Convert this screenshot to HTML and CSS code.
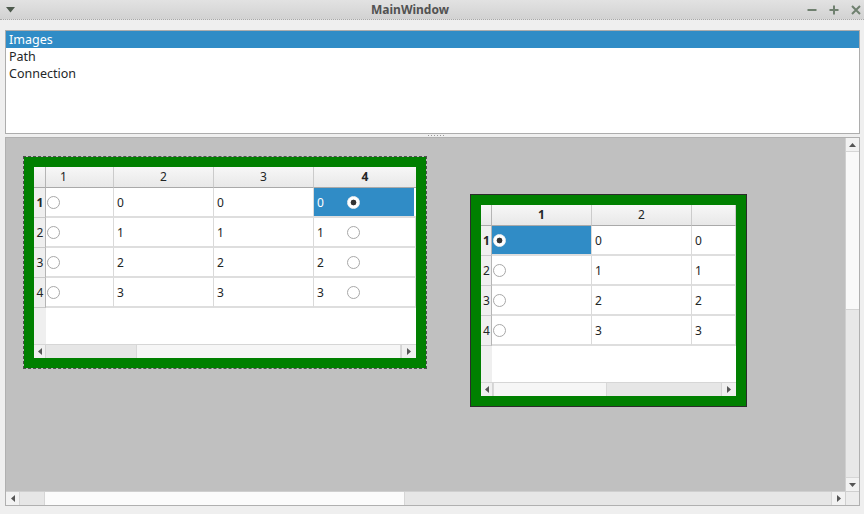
FILE: index.html
```html
<!DOCTYPE html>
<html>
<head>
<meta charset="utf-8">
<link rel="stylesheet" href="styles.css">
</head>
<body>
<div class="window">
  <div class="titlebar">
    <div class="tb-left">
      <svg width="9" height="6" viewBox="0 0 9 6"><path d="M0 0H9L4.5 5.5Z" fill="#4d5a4d"/></svg>
    </div>
    <div class="tb-title">MainWindow</div>
    <div class="tb-right">
      <svg class="tb-btn" width="10" height="10" viewBox="0 0 10 10"><path d="M0.5 5H9.5" stroke="#6f806f" stroke-width="2"/></svg>
      <svg class="tb-btn" width="10" height="10" viewBox="0 0 10 10"><path d="M0.5 5H9.5M5 0.5V9.5" stroke="#6f806f" stroke-width="2"/></svg>
      <svg class="tb-btn" width="10" height="10" viewBox="0 0 10 10"><path d="M1 1L9 9M9 1L1 9" stroke="#6f806f" stroke-width="2"/></svg>
    </div>
  </div>
  <div class="central">
    <div class="list">
      <div class="item sel">Images</div>
      <div class="item">Path</div>
      <div class="item">Connection</div>
    </div>
    <div class="splitter"><div class="grip"></div></div>
    <div class="scrollarea">
      <div class="viewport">
        <div class="frame frame-a">
          <div class="green">
            <div class="tbl tbl-a">
              <div class="hh corner"></div>
              <div class="hh hh-first">1</div>
              <div class="hh">2</div>
              <div class="hh">3</div>
              <div class="hh bold">4</div>

              <div class="vh bold">1</div>
              <div class="td"><span class="radio"></span></div>
              <div class="td">0</div>
              <div class="td">0</div>
              <div class="td sel"><span class="num">0</span><span class="radio on"></span></div>

              <div class="vh">2</div>
              <div class="td"><span class="radio"></span></div>
              <div class="td">1</div>
              <div class="td">1</div>
              <div class="td"><span class="num">1</span><span class="radio"></span></div>

              <div class="vh">3</div>
              <div class="td"><span class="radio"></span></div>
              <div class="td">2</div>
              <div class="td">2</div>
              <div class="td"><span class="num">2</span><span class="radio"></span></div>

              <div class="vh">4</div>
              <div class="td"><span class="radio"></span></div>
              <div class="td">3</div>
              <div class="td">3</div>
              <div class="td"><span class="num">3</span><span class="radio"></span></div>

              <div class="vh-fill"></div>
              <div class="fill"></div>

              <div class="tscroll">
                <div class="arrow"><svg width="4" height="7" viewBox="0 0 4 7"><path d="M4 0V7L0 3.5Z" fill="#555"/></svg></div>
                <div class="track ta-1"></div>
                <div class="handle ta-2"></div>
                <div class="arrow arrow-r"><svg width="4" height="7" viewBox="0 0 4 7"><path d="M0 0V7L4 3.5Z" fill="#555"/></svg></div>
              </div>
            </div>
          </div>
        </div>

        <div class="frame frame-b">
          <div class="green">
            <div class="tbl tbl-b">
              <div class="hh corner"></div>
              <div class="hh bold">1</div>
              <div class="hh">2</div>
              <div class="hh"></div>

              <div class="vh bold">1</div>
              <div class="td sel"><span class="radio on"></span></div>
              <div class="td">0</div>
              <div class="td">0</div>

              <div class="vh">2</div>
              <div class="td"><span class="radio"></span></div>
              <div class="td">1</div>
              <div class="td">1</div>

              <div class="vh">3</div>
              <div class="td"><span class="radio"></span></div>
              <div class="td">2</div>
              <div class="td">2</div>

              <div class="vh">4</div>
              <div class="td"><span class="radio"></span></div>
              <div class="td">3</div>
              <div class="td">3</div>

              <div class="vh-fill"></div>
              <div class="fill"></div>

              <div class="tscroll">
                <div class="arrow"><svg width="4" height="7" viewBox="0 0 4 7"><path d="M4 0V7L0 3.5Z" fill="#555"/></svg></div>
                <div class="handle tb-1"></div>
                <div class="track tb-2"></div>
                <div class="arrow arrow-r"><svg width="4" height="7" viewBox="0 0 4 7"><path d="M0 0V7L4 3.5Z" fill="#555"/></svg></div>
              </div>
            </div>
          </div>
        </div>
      </div>

      <div class="vbar">
        <div class="varrow"><svg width="7" height="4" viewBox="0 0 7 4"><path d="M0 4H7L3.5 0Z" fill="#555"/></svg></div>
        <div class="vhandle"></div>
        <div class="vtrack"></div>
        <div class="varrow varrow-d"><svg width="7" height="4" viewBox="0 0 7 4"><path d="M0 0H7L3.5 4Z" fill="#555"/></svg></div>
      </div>
      <div class="hbar">
        <div class="harrow"><svg width="4" height="7" viewBox="0 0 4 7"><path d="M4 0V7L0 3.5Z" fill="#555"/></svg></div>
        <div class="htrack h-1"></div>
        <div class="hhandle"></div>
        <div class="htrack h-2"></div>
        <div class="harrow harrow-r"><svg width="4" height="7" viewBox="0 0 4 7"><path d="M0 0V7L4 3.5Z" fill="#555"/></svg></div>
      </div>
      <div class="sa-corner"></div>
    </div>
  </div>
</div>
</body>
</html>
```

FILE: styles.css
```css
* { box-sizing: border-box; }
html, body {
  margin: 0;
  padding: 0;
}
body {
  width: 864px;
  height: 514px;
  overflow: hidden;
  background: #efefef;
  font-family: "Noto Sans", "DejaVu Sans", sans-serif;
  font-size: 12px;
  color: #232627;
}
.window {
  display: flex;
  flex-direction: column;
  width: 864px;
  height: 514px;
}
.titlebar {
  height: 20px;
  display: flex;
  align-items: center;
  background: linear-gradient(#e2e2e2, #d2d2d2);
  border-bottom: 1px dotted #a9a9a9;
}
.tb-left {
  width: 20px;
  padding-left: 6px;
  display: flex;
  align-items: center;
  padding-top: 1px;
}
.tb-title {
  flex: 1;
  text-align: center;
  font-weight: bold;
  color: #525252;
  font-size: 12px;
  line-height: 19px;
}
.tb-right {
  width: 64px;
  display: flex;
  align-items: center;
  gap: 12px;
  padding-left: 7px;
}
.tb-btn { display: block; }

.central {
  flex: 1;
  display: flex;
  flex-direction: column;
  padding: 10px 4px 8px 5px;
}
.list {
  height: 104px;
  border: 1px solid #adadad;
  background: #fff;
}
.item {
  height: 17px;
  line-height: 17px;
  padding-left: 3px;
  font-size: 12.5px;
  color: #232627;
}
.item.sel {
  background: #308cc6;
  color: #fff;
}
.splitter {
  height: 3px;
  display: flex;
  justify-content: center;
  align-items: center;
  padding-left: 7px;
}
.grip {
  width: 17px;
  height: 1px;
  background: repeating-linear-gradient(90deg, #9a9a9a 0 1px, transparent 1px 3px);
}
.scrollarea {
  height: 369px;
  border: 1px solid #b0b0b0;
  display: grid;
  grid-template-columns: 1fr 14px;
  grid-template-rows: 1fr 14px;
}
.viewport {
  position: relative;
  background: #c0c0c0;
  overflow: hidden;
}
.frame {
  position: absolute;
  width: 404px;
  height: 213px;
}
.frame-a {
  left: 17px;
  top: 18px;
  border: 1px dashed #505050;
}
.frame-b {
  left: 464px;
  top: 56px;
  width: 277px;
  border: 1px solid #2c2c2c;
}
.green {
  width: 100%;
  height: 100%;
  background: #008000;
  padding: 10px;
}
.tbl {
  width: 100%;
  height: 100%;
  background: #fff;
  display: grid;
  grid-template-rows: 21px repeat(4, 30px) 1fr 14px;
  overflow: hidden;
}
.tbl-a { grid-template-columns: 12px 68px 100px 100px 101px 1fr; }
.tbl-b { grid-template-columns: 11px 100px 100px 1fr; }

.hh {
  background: linear-gradient(#f7f7f7, #e8e8e8);
  border-right: 1px solid #cbcbcb;
  border-bottom: 1px solid #a9a9a9;
  text-align: center;
  line-height: 20px;
  font-size: 12px;
  color: #232627;
}
.tbl-a .hh:nth-child(5) { grid-column: span 2; border-right: none; }
.tbl-a .td:has(+ .vh), .tbl-a .td:has(+ .vh-fill) { grid-column: span 2; }
.hh-first {
  text-align: left;
  padding-left: 14px;
}
.hh.corner { border-right: 1px solid #b5b5b5; }
.bold { font-weight: bold; }
.vh {
  background: #efefef;
  border-right: 1px solid #b5b5b5;
  border-bottom: 1px solid #c9c9c9;
  text-align: center;
  padding-left: 1px;
  line-height: 29px;
  font-size: 12px;
}
.vh-fill {
  background: #efefef;
}
.fill { grid-column: 2 / -1; background: #fff; }
.td {
  border-right: 1px solid #dadada;
  border-bottom: 2px solid #dedede;
  display: flex;
  align-items: center;
  padding-left: 3px;
  font-size: 12px;
  white-space: nowrap;
}
.td:has(.radio:only-child) { padding-left: 1px; }
.td.sel {
  background: #308cc6;
  color: #fff;
}
.tbl-a .td.sel {
  background: linear-gradient(90deg, #308cc6 0 100px, #fff 100px);
  border-right: none;
}
.num {
  display: inline-block;
  width: 30px;
}
.radio {
  display: inline-block;
  width: 13px;
  height: 13px;
  border-radius: 50%;
  border: 1px solid #a8a8a8;
  background: #fff;
  flex: none;
}
.radio.on {
  border-color: #f0f0f0;
  background: radial-gradient(circle, #333 0 2.6px, #fff 3.2px);
}
.tscroll {
  grid-column: 1 / -1;
  display: flex;
  border-top: 1px solid #d6d6d6;
  background: #e8e8e8;
}
.arrow {
  width: 12px;
  display: flex;
  align-items: center;
  justify-content: center;
  background: #f0f0f0;
  border-right: 1px solid #d4d4d4;
}
.arrow-r {
  width: 15px;
  border-right: none;
  border-left: 1px solid #d4d4d4;
}
.track { background: #e6e6e6; }
.handle { background: #f6f6f6; border-left: 1px solid #d8d8d8; border-right: 1px solid #d8d8d8; }
.ta-1 { width: 90px; }
.ta-2 { flex: 1; }
.tb-1 { width: 114px; }
.tb-2 { flex: 1; }

.vbar {
  display: flex;
  flex-direction: column;
  border-left: 1px solid #d0d0d0;
  background: #e8e8e8;
}
.varrow {
  height: 14px;
  display: flex;
  align-items: center;
  justify-content: center;
  background: #f2f2f2;
  border-bottom: 1px solid #d6d6d6;
}
.varrow-d {
  border-bottom: none;
  border-top: 1px solid #d6d6d6;
}
.vhandle {
  height: 158px;
  background: #f9f9f9;
  border-bottom: 1px solid #d4d4d4;
}
.vtrack { flex: 1; background: #e8e8e8; }
.hbar {
  display: flex;
  border-top: 1px solid #cfcfcf;
  background: #e8e8e8;
}
.harrow {
  width: 14px;
  display: flex;
  align-items: center;
  justify-content: center;
  background: #f2f2f2;
  border-right: 1px solid #d6d6d6;
}
.harrow-r {
  border-right: none;
  border-left: 1px solid #d6d6d6;
}
.htrack { background: #e6e6e6; }
.h-1 { width: 24px; }
.h-2 { flex: 1; }
.hhandle {
  width: 361px;
  background: #fbfbfb;
  border-left: 1px solid #d6d6d6;
  border-right: 1px solid #d6d6d6;
}
.sa-corner {
  background: #ececec;
  border-top: 1px solid #cfcfcf;
  border-left: 1px solid #d0d0d0;
}
```
